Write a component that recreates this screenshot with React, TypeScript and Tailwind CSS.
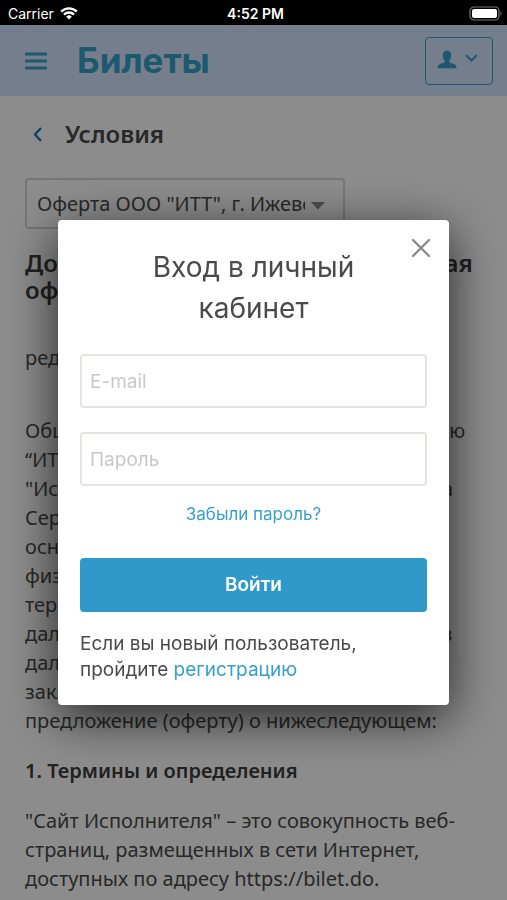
import { FormEvent, useState } from "react";

const OFFER_LINES = [
  "Общество с ограниченной ответственностью",
  "“ИТТ”, именуемое в дальнейшем",
  '"Исполнитель", и от имени администратора',
  "Сервиса, действующего на",
  "основании Устава, предлагает",
  "физическим лицам на условиях и",
  "терминах настоящего договора,",
  'далее именуемые "Заказчик" и совместно в',
  'далее "Стороны", настоящим',
  "заключить договор и публикует",
  "предложение (оферту) о нижеследующем:",
];

const SITE_LINES = [
  '"Сайт Исполнителя" – это совокупность веб-',
  "страниц, размещенных в сети Интернет,",
  "доступных по адресу https://bilet.do.",
];

/**
 * StatusBar is a component that renders the phone's status bar.
 *
 * @returns {JSX.Element} The component.
 */
function StatusBar() {
  return (
    <div className="grid h-[25px] grid-cols-3 items-center bg-black pl-2 pr-1 pt-0.5 font-['Inter',sans-serif] text-sm leading-5 text-white">
      <div className="flex items-center gap-1.5">
        <span>Carrier</span>
        <svg width="18" height="13" viewBox="0 0 18 13" fill="none" stroke="white" strokeWidth="2.3">
          <path d="M1.2 4.6a11 11 0 0 1 15.6 0" />
          <path d="M4 7.6a7 7 0 0 1 10 0" />
          <path d="M9 12.6 6.2 9.7a4 4 0 0 1 5.6 0Z" fill="white" stroke="none" />
        </svg>
      </div>
      <span className="text-center font-semibold">4:52 PM</span>
      <svg className="justify-self-end" width="34" height="16" viewBox="0 0 34 16">
        <rect x="1" y="1" width="29" height="13" rx="4" fill="none" stroke="#777" strokeWidth="1.2" />
        <rect x="3" y="3" width="25" height="9" rx="2" fill="white" />
        <path d="M31.5 5.500v4c1.600-.7 1.600-3.300 0-4Z" fill="#777" />
      </svg>
    </div>
  );
}

/**
 * Header is a component that renders the site header.
 *
 * @returns {JSX.Element} The component.
 */
function Header() {
  return (
    <header className="flex h-[71px] items-center bg-[#d5e6ff] pl-[25px] pr-3.5 text-[#34a3cb]">
      <button type="button" aria-label="Меню">
        <svg width="22" height="18" viewBox="0 0 22 18" stroke="currentColor" strokeWidth="2.8">
          <path d="M0 2h22M0 9h22M0 16h22" />
        </svg>
      </button>
      <span className="ml-[30px] font-['Inter',sans-serif] text-[35px] font-bold">Билеты</span>
      <button
        type="button"
        aria-label="Профиль"
        className="ml-auto flex h-12 w-[68px] items-start justify-center gap-2 rounded border border-current pr-1 pt-3"
      >
        <svg width="20" height="19" viewBox="0 0 20 19" fill="currentColor">
          <path d="M10 .5c2.7 0 4.2 1.9 4.2 4.7 0 2.4-.9 4.3-1.9 5.4-.3.8-.1 1.5.7 2 2.2.9 4.8 1.6 5.9 3 .5.7.6 1.7.6 2.6H.5c0-.9.1-1.900.6-2.600 1.100-1.400 3.700-2.100 5.900-3 .8-.5 1-1.200.7-2C6.700 9.500 5.800 7.600 5.800 5.200 5.800 2.400 7.300.5 10 .5Z" />
        </svg>
        <svg className="mt-1" width="13" height="9" viewBox="0 0 13 9" fill="none" stroke="currentColor" strokeWidth="2">
          <path d="m1 1 5.5 5.5L12 1" />
        </svg>
      </button>
    </header>
  );
}

/**
 * LoginDialog is a component that renders the login form over the page.
 *
 * @returns {JSX.Element} The component.
 */
function LoginDialog({ onClose }: { onClose: () => void }) {
  const handleSubmit = (event: FormEvent) => {
    event.preventDefault();
  };

  const inputClass =
    "h-[54px] w-full rounded border-2 border-[#e3e3df] bg-white px-2 text-[19px] text-[#4a4a4a] outline-none placeholder:text-[#c8c8c8]";

  return (
    <div className="fixed inset-x-0 bottom-0 top-[25px] flex items-start bg-black/45 px-[58px] pt-[195px]">
      <div
        role="dialog"
        aria-modal="true"
        aria-labelledby="login-title"
        className="relative w-full rounded bg-white px-[22px] pb-[22px] pt-[27px] font-['Inter',sans-serif] text-[#4a4a4a] shadow-[0_12px_50px_rgba(0,0,0,0.75)]"
      >
        <button type="button" aria-label="Закрыть" onClick={onClose} className="absolute right-[18px] top-[18px] text-[#8a8a8a]">
          <svg width="20" height="20" viewBox="0 0 20 20" stroke="currentColor" strokeWidth="2.4" strokeLinecap="round">
            <path d="m2 2 16 16M18 2 2 18" />
          </svg>
        </button>
        <h2 id="login-title" className="px-10 text-center text-[28px] leading-[41px]">
          Вход в личный кабинет
        </h2>
        <form onSubmit={handleSubmit} className="mt-[25px]">
          <input type="email" aria-label="E-mail" placeholder="E-mail" className={inputClass} />
          <input type="password" aria-label="Пароль" placeholder="Пароль" className={`mt-6 ${inputClass}`} />
          <p className="mt-4 text-center text-[17px] leading-6">
            <a href="#forgot" className="text-[#369fce]">
              Забыли пароль?
            </a>
          </p>
          <button type="submit" className="mt-8 h-[54px] w-full rounded bg-[#2f9aca] text-[19px] font-semibold text-white">
            Войти
          </button>
        </form>
        <p className="mt-[19px] text-[19px] leading-[26px]">
          Если вы новый пользователь, пройдите{" "}
          <a href="#register" className="text-[#369fce]">
            регистрацию
          </a>
        </p>
      </div>
    </div>
  );
}

export default function App() {
  const [isLoginOpen, setIsLoginOpen] = useState(true);

  return (
    <div className="h-screen overflow-hidden bg-white font-['Noto_Sans',sans-serif] text-[#4a4a4a]">
      <StatusBar />
      <Header />
      <main className="px-[25px] pt-5">
        <div className="flex items-center gap-[23px] pl-2">
          <a href="#back" aria-label="Назад" className="text-[#2272bd]">
            <svg width="9" height="15" viewBox="0 0 9 15" fill="none" stroke="currentColor" strokeWidth="2.4">
              <path d="M8 1 2 7.5 8 14" />
            </svg>
          </a>
          <h1 className="text-2xl font-semibold leading-9">Условия</h1>
        </div>

        <div className="relative mt-[26px] w-[320px]">
          <select
            aria-label="Оферта"
            className="h-[51px] w-full appearance-none rounded border-2 border-[#d6d6d2] bg-white pl-2.5 pr-[38px] text-xl"
          >
            <option>Оферта ООО "ИТТ", г. Ижевск</option>
          </select>
          <svg className="pointer-events-none absolute right-5 top-6" width="14" height="8" viewBox="0 0 14 8" fill="#8c8c8c">
            <path d="M0 0h14L7 7.5Z" />
          </svg>
        </div>

        <h2 className="mt-5 whitespace-nowrap text-2xl font-semibold leading-[27px] text-[#3c3c3c]">
          Договор оказания услуг – публичная
          <br />
          оферта
        </h2>
        <p className="mt-10 text-xl leading-[29px]">редакция от 01.01.2019</p>
        <p className="mt-11 whitespace-nowrap text-xl leading-[29px]">
          {OFFER_LINES.map((line) => (
            <span key={line} className="block">
              {line}
            </span>
          ))}
        </p>
        <h3 className="mt-[21px] text-xl font-semibold leading-[29px] text-[#3c3c3c]">1. Термины и определения</h3>
        <p className="mt-[21px] whitespace-nowrap text-xl leading-[29px]">
          {SITE_LINES.map((line) => (
            <span key={line} className="block">
              {line}
            </span>
          ))}
        </p>
      </main>

      {isLoginOpen && <LoginDialog onClose={() => setIsLoginOpen(false)} />}
    </div>
  );
}
